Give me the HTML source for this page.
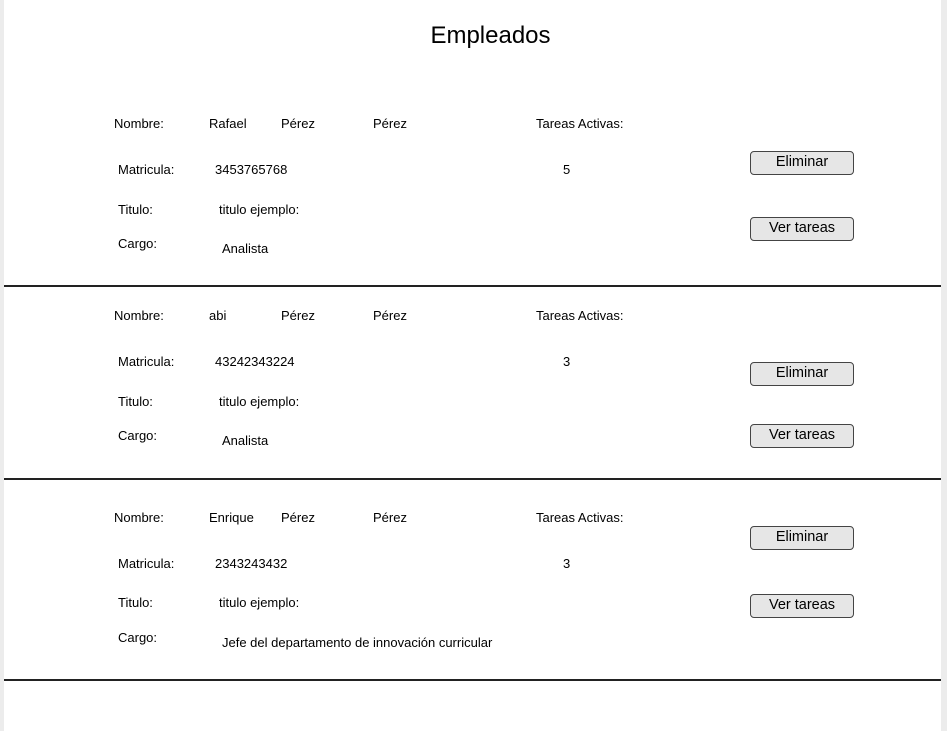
<!DOCTYPE html>
<html><head><meta charset="utf-8"><style>
body{margin:0;width:947px;height:731px;background:#ececec;position:relative;overflow:hidden;font-family:"Liberation Sans",sans-serif;color:#000}
#pg{position:absolute;left:4px;top:0;width:937px;height:731px;background:#fff}
.t{position:absolute;font-size:13px;line-height:14px;white-space:nowrap;margin-top:1px}
.h{position:absolute;left:4px;width:937px;height:2px;background:#222}
.b{position:absolute;left:750px;width:102px;height:22px;border:1px solid #444;border-radius:4px;background:#e6e6e6;font-size:14.5px;line-height:21px;text-align:center}
h1{position:absolute;margin:0;left:0;width:981px;top:22px;text-align:center;font-size:24px;font-weight:normal;line-height:28px}
</style></head><body><div id="pg"></div>
<h1>Empleados</h1>

<div class="t" style="left:114px;top:116px">Nombre:</div>
<div class="t" style="left:209px;top:116px">Rafael</div>
<div class="t" style="left:281px;top:116px">Pérez</div>
<div class="t" style="left:373px;top:116px">Pérez</div>
<div class="t" style="left:536px;top:116px">Tareas Activas:</div>
<div class="t" style="left:118px;top:162px">Matricula:</div>
<div class="t" style="left:215px;top:162px">3453765768</div>
<div class="t" style="left:563px;top:162px">5</div>
<div class="t" style="left:118px;top:202px">Titulo:</div>
<div class="t" style="left:219px;top:202px">titulo ejemplo:</div>
<div class="t" style="left:118px;top:236px">Cargo:</div>
<div class="t" style="left:222px;top:241px">Analista</div>
<div class="b" style="top:151px">Eliminar</div>
<div class="b" style="top:217px">Ver tareas</div>
<div class="h" style="top:285px"></div>

<div class="t" style="left:114px;top:308px">Nombre:</div>
<div class="t" style="left:209px;top:308px">abi</div>
<div class="t" style="left:281px;top:308px">Pérez</div>
<div class="t" style="left:373px;top:308px">Pérez</div>
<div class="t" style="left:536px;top:308px">Tareas Activas:</div>
<div class="t" style="left:118px;top:354px">Matricula:</div>
<div class="t" style="left:215px;top:354px">43242343224</div>
<div class="t" style="left:563px;top:354px">3</div>
<div class="t" style="left:118px;top:394px">Titulo:</div>
<div class="t" style="left:219px;top:394px">titulo ejemplo:</div>
<div class="t" style="left:118px;top:428px">Cargo:</div>
<div class="t" style="left:222px;top:433px">Analista</div>
<div class="b" style="top:362px">Eliminar</div>
<div class="b" style="top:424px">Ver tareas</div>
<div class="h" style="top:478px"></div>

<div class="t" style="left:114px;top:510px">Nombre:</div>
<div class="t" style="left:209px;top:510px">Enrique</div>
<div class="t" style="left:281px;top:510px">Pérez</div>
<div class="t" style="left:373px;top:510px">Pérez</div>
<div class="t" style="left:536px;top:510px">Tareas Activas:</div>
<div class="t" style="left:118px;top:556px">Matricula:</div>
<div class="t" style="left:215px;top:556px">2343243432</div>
<div class="t" style="left:563px;top:556px">3</div>
<div class="t" style="left:118px;top:595px">Titulo:</div>
<div class="t" style="left:219px;top:595px">titulo ejemplo:</div>
<div class="t" style="left:118px;top:630px">Cargo:</div>
<div class="t" style="left:222px;top:635px">Jefe del departamento de innovación curricular</div>
<div class="b" style="top:526px">Eliminar</div>
<div class="b" style="top:594px">Ver tareas</div>
<div class="h" style="top:679px"></div>
</body></html>
